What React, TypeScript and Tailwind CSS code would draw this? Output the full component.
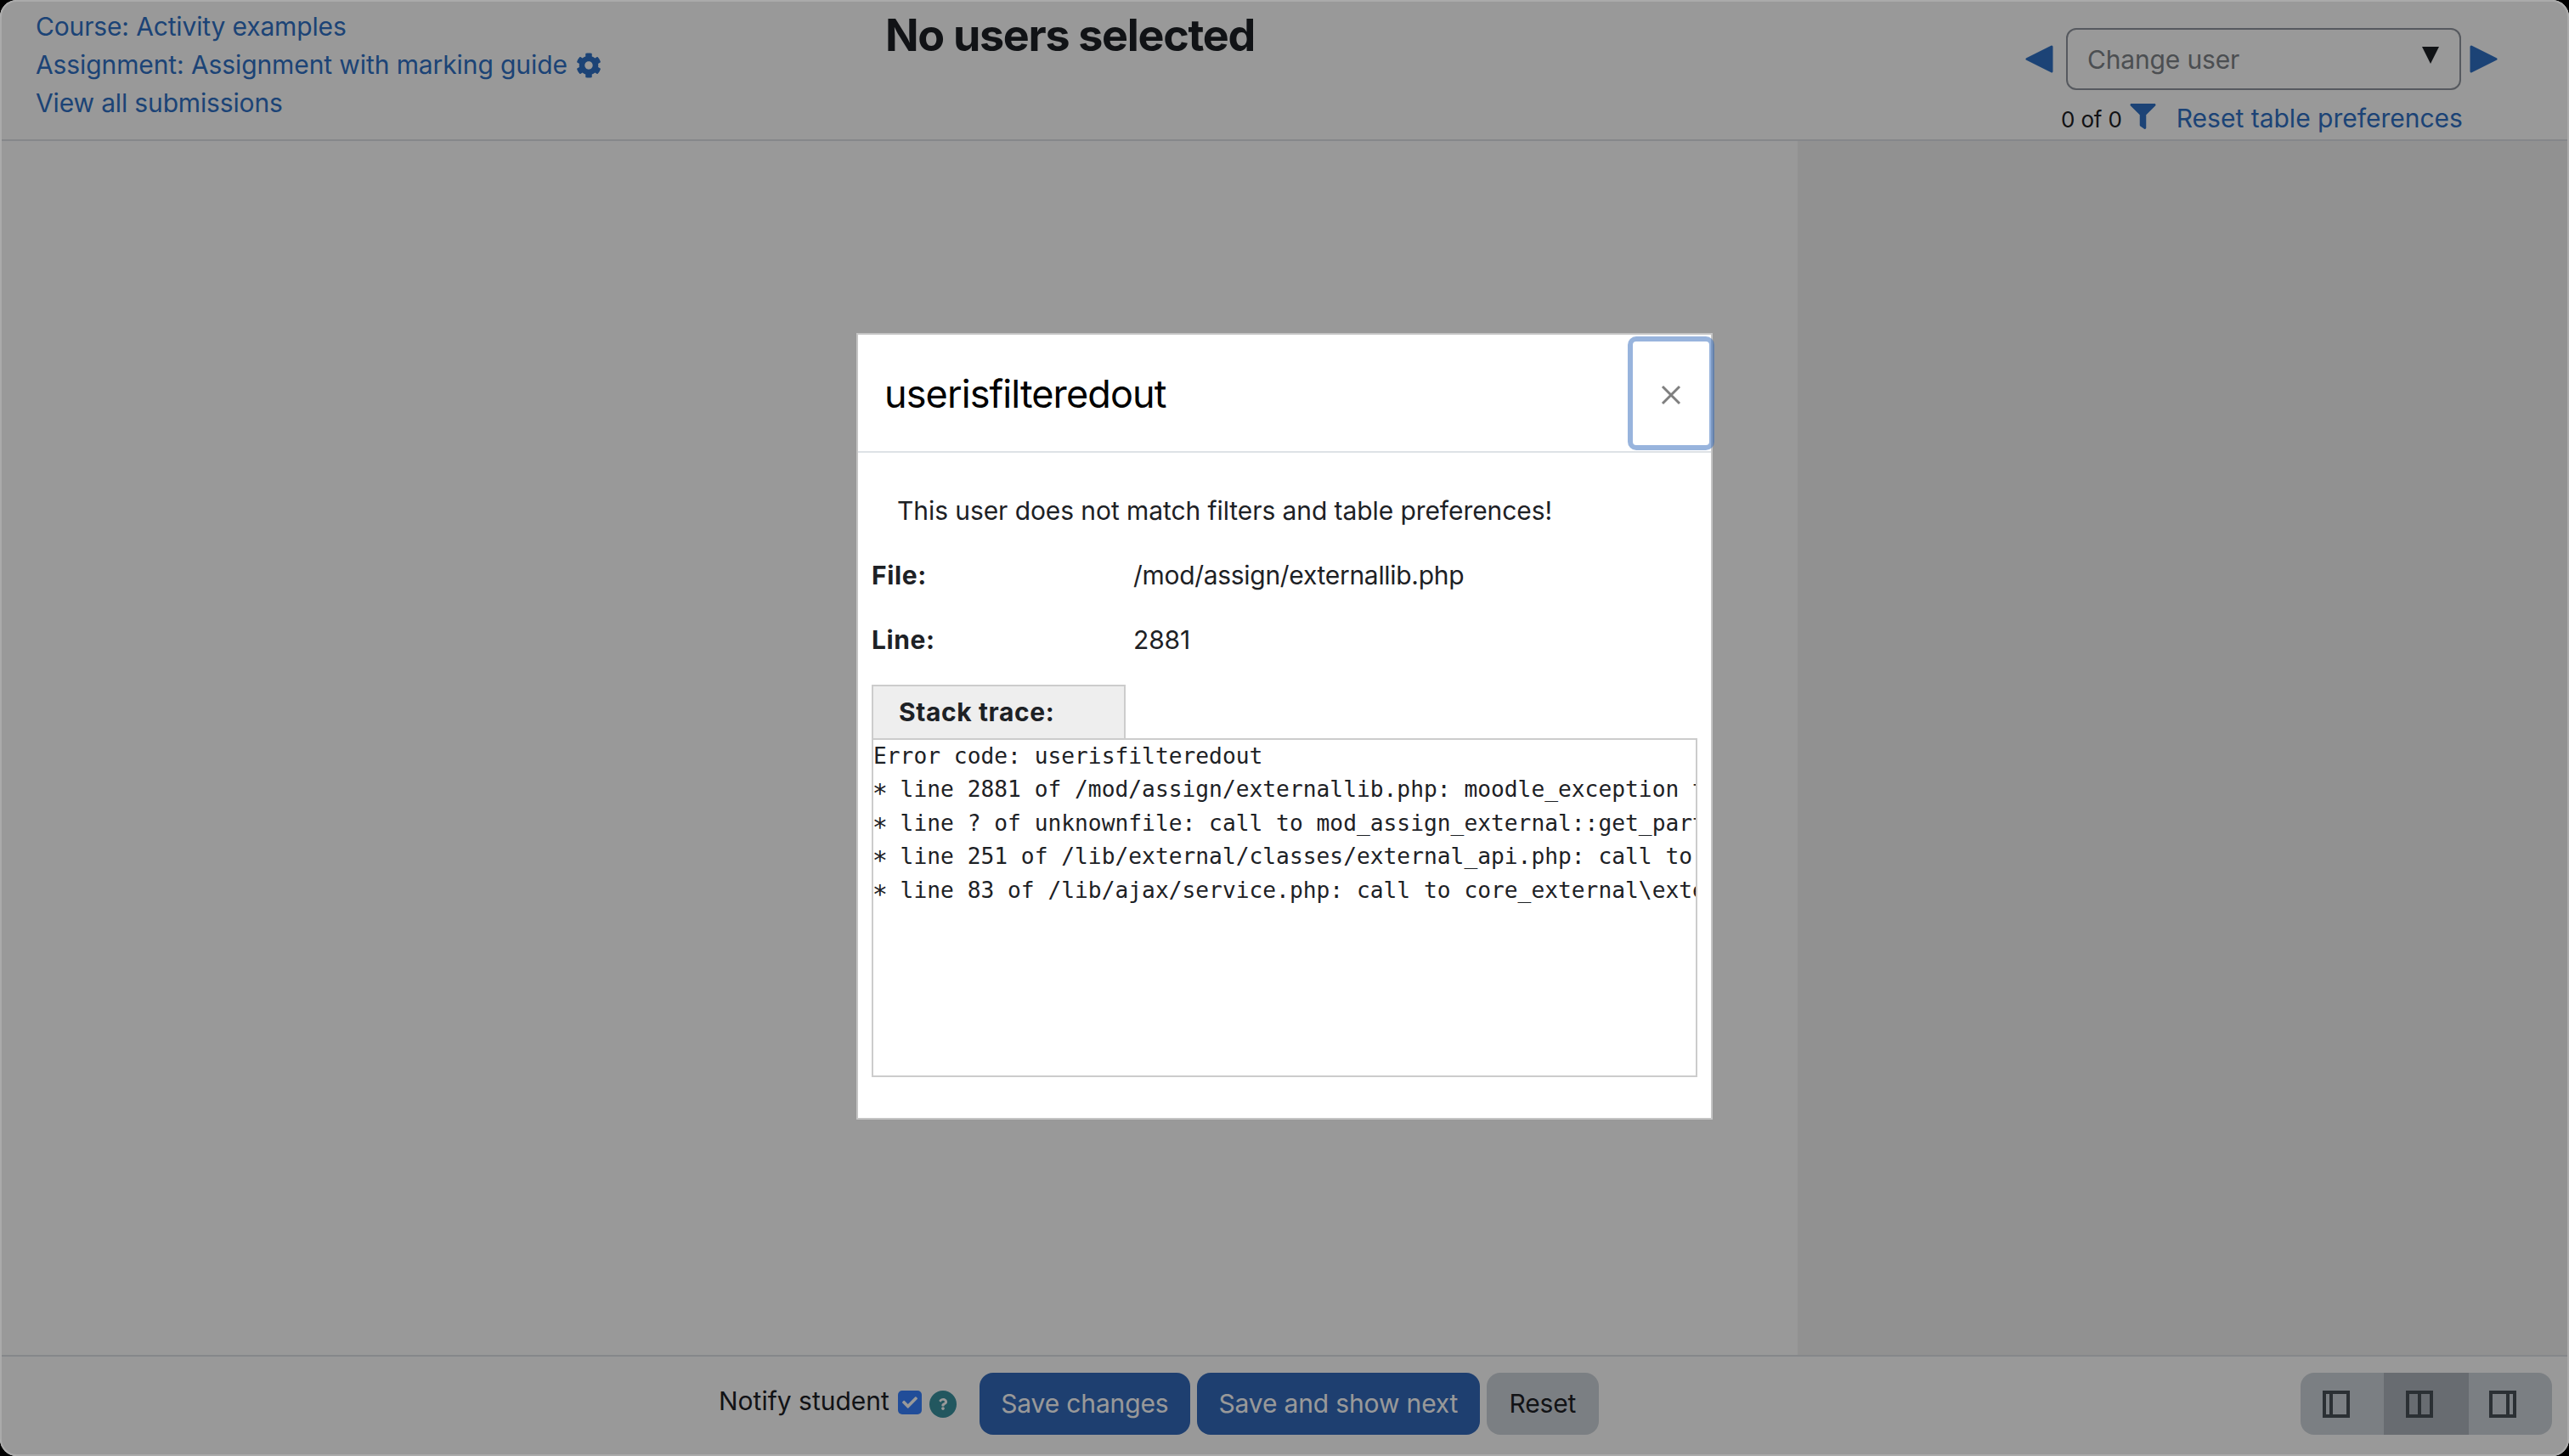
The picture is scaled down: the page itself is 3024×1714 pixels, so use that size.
import { FaCog, FaFilter, FaQuestion, FaCheck } from "react-icons/fa";

const traceLines = [
  "* line 2881 of /mod/assign/externallib.php: moodle_exception thrown",
  "* line ? of unknownfile: call to mod_assign_external::get_participant()",
  "* line 251 of /lib/external/classes/external_api.php: call to call_user_func_array()",
  "* line 83 of /lib/ajax/service.php: call to core_external\\external_api::call_external_function()",
];

function Arrow({ dir }: { dir: "left" | "right" }) {
  return (
    <svg width="33" height="33" viewBox="0 0 33 33" className="fill-[#2f71c5] stroke-[#2f71c5]">
      <path
        d={dir === "left" ? "M31 2 L2 16.5 L31 31 Z" : "M2 2 L31 16.5 L2 31 Z"}
        strokeWidth="3"
        strokeLinejoin="round"
      />
    </svg>
  );
}

function LayoutIcon({ bar }: { bar: number }) {
  return (
    <svg width="32" height="32" viewBox="0 0 32 32" className="fill-[#495057]">
      <path d="M0 0H32V32H0Z M4 4V28H28V4Z" fillRule="evenodd" />
      <rect x={bar} y="0" width="4" height="32" />
    </svg>
  );
}

export default function App() {
  return (
    <div className="relative w-[3024px] h-[1714px] overflow-hidden bg-black font-[Inter,sans-serif] text-[30px] leading-[45px] tracking-[-0.15px] text-[#1d2125]">
      <div className="flex flex-col h-full rounded-[20px] overflow-hidden bg-white">
        {/* Header */}
        <header className="flex h-[166px] shrink-0 border-b-2 border-[#dee2e6]">
          <div className="w-[1042px] shrink-0 pl-[42px] pt-[9px] text-[#2f71c5]">
            <div>Course: Activity examples</div>
            <div className="flex items-center gap-[10px]">
              <span className="tracking-[-0.1px]">Assignment: Assignment with marking guide</span>
              <FaCog className="w-[30px] h-[30px]" />
            </div>
            <div>View all submissions</div>
          </div>
          <h2 className="pt-[11px] text-[52px] leading-[62px] font-bold tracking-[-1.3px]">No users selected</h2>
          <div className="ml-auto w-[640px] shrink-0">
            <div className="flex items-center mt-[33px]">
              <Arrow dir="left" />
              <div className="relative ml-[15px] w-[465px] h-[73px] rounded-[12px] border-2 border-[#8f959e] pl-[23px] pt-[2px] flex items-center text-[#7e8388]">
                Change user
                <svg width="20" height="20" viewBox="0 0 20 20" className="absolute right-[24px] top-[20px] fill-[#1d2125]">
                  <path d="M0 0H20L10 20Z" />
                </svg>
              </div>
              <div className="ml-[10px]">
                <Arrow dir="right" />
              </div>
            </div>
            <div className="flex items-center mt-[11px] pl-[42px] h-[45px]">
              <span className="text-[26px] mt-[2px]">0 of 0</span>
              <FaFilter className="ml-[8px] -mt-[6px] w-[33px] h-[30px] text-[#2f71c5]" />
              <span className="ml-[23px] tracking-normal text-[#2f71c5]">Reset table preferences</span>
            </div>
          </div>
        </header>

        {/* Main panels */}
        <main className="flex flex-1">
          <div className="w-[2116px] shrink-0" />
          <div className="flex-1 bg-[#f2f2f2]" />
        </main>

        {/* Footer */}
        <footer className="flex items-center h-[119px] shrink-0 border-t-2 border-[#dee2e6] pl-[846px] pr-[20px] pb-[6px]">
          <span className="-mt-[6px] tracking-normal">Notify student</span>
          <span className="ml-[10px] -mt-[4px] flex items-center justify-center w-[28px] h-[28px] rounded-[5px] bg-[#3780ff] text-white">
            <FaCheck className="w-[18px] h-[18px]" />
          </span>
          <span className="ml-[9px] flex items-center justify-center w-[32px] h-[32px] rounded-full bg-[#3a919f] text-white">
            <FaQuestion className="w-[14px] h-[14px]" />
          </span>
          <button className="ml-[27px] h-[73px] w-[248px] rounded-[16px] bg-[#3269bb] text-white">Save changes</button>
          <button className="ml-[8px] h-[73px] w-[333px] rounded-[16px] bg-[#3269bb] text-white">Save and show next</button>
          <button className="ml-[8px] h-[73px] w-[132px] rounded-[16px] bg-[#ced4da]">Reset</button>
          <div className="ml-auto flex h-[73px] w-[296px] rounded-[16px] overflow-hidden bg-[#ced4da]">
            <div className="w-[98px] flex items-center pl-[26px]">
              <LayoutIcon bar={8} />
            </div>
            <div className="w-[100px] flex items-center pl-[26px] bg-[#aeb5bc]">
              <LayoutIcon bar={14} />
            </div>
            <div className="flex-1 flex items-center pl-[24px]">
              <LayoutIcon bar={20} />
            </div>
          </div>
        </footer>
      </div>

      {/* Backdrop */}
      <div className="absolute inset-0 rounded-[20px] border-2 border-[#aaaaaa] bg-black/40" />

      {/* Modal */}
      <div className="absolute left-[1008px] top-[392px] w-[1008px] h-[926px] border-2 border-[#c4c4c4] bg-white">
        <div className="flex items-center justify-between h-[139px] border-b-2 border-[#dee2e6] pl-[31px]">
          <h5 className="pt-[2px] text-[45px] leading-[54px] tracking-[-0.9px] text-black">userisfilteredout</h5>
          <button className="-mr-[4px] flex items-center justify-center w-[102px] h-[134px] rounded-[10px] border-[6px] border-[#3269bb]/50 text-[#7f7f7f]">
            <svg width="24" height="24" viewBox="0 0 24 24" className="stroke-current mt-[4px]">
              <path d="M2 2L22 22M22 2L2 22" strokeWidth="3" />
            </svg>
          </button>
        </div>
        <div className="pl-[16px]">
          <p className="mt-[46px] ml-[30px] tracking-[-0.08px]">This user does not match filters and table preferences!</p>
          <div className="flex mt-[31px]">
            <b className="w-[308px] font-bold tracking-[0.6px]">File:</b>
            <span className="tracking-[-0.3px]">/mod/assign/externallib.php</span>
          </div>
          <div className="flex mt-[31px]">
            <b className="w-[308px] font-bold tracking-[0.6px]">Line:</b>
            <span>2881</span>
          </div>
          <div className="mt-[30px] w-[299px] h-[63px] border-2 border-b-0 border-[#cccccc] bg-[#eeeeee] pl-[30px] flex items-center font-bold tracking-[0.6px]">
            Stack trace:
          </div>
          <div className="w-[972px] h-[399px] overflow-hidden border-2 border-[#cccccc] whitespace-pre font-['DejaVu_Sans_Mono',monospace] text-[26.25px] leading-[39.4px] tracking-normal">
            <div>Error code: userisfilteredout</div>
            {traceLines.map((line) => (
              <div key={line}>
                <span className="inline-block translate-y-[5px] scale-[1.15]">{line.slice(0, 1)}</span>
                {line.slice(1)}
              </div>
            ))}
          </div>
        </div>
      </div>
    </div>
  );
}
